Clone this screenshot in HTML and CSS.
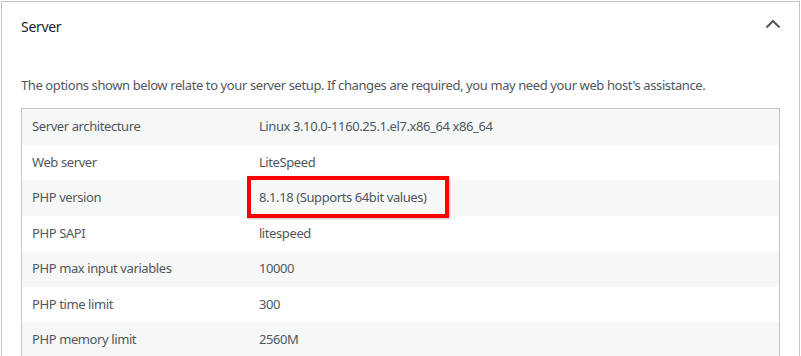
FILE: index.html
```html
<!DOCTYPE html>
<html>
<head>
<meta charset="utf-8">
<link rel="stylesheet" href="styles.css">
</head>
<body>
<section class="panel">
  <header class="panel-head">
    <h3 class="panel-title">Server</h3>
    <svg class="chevron" width="16" height="10" viewBox="0 0 16 10"><path d="M1.5 8.5 L8 2 L14.5 8.5" fill="none" stroke="#50575e" stroke-width="2"/></svg>
  </header>
  <div class="panel-body">
    <p class="desc">The options shown below relate to your server setup. If changes are required, you may need your web host's assistance.</p>
    <table class="info">
      <tbody>
        <tr><td class="label">Server architecture</td><td>Linux 3.10.0-1160.25.1.el7.x86_64 x86_64</td></tr>
        <tr><td class="label">Web server</td><td>LiteSpeed</td></tr>
        <tr><td class="label">PHP version</td><td class="marked">8.1.18 (Supports 64bit values)<span class="highlight"></span></td></tr>
        <tr><td class="label">PHP SAPI</td><td>litespeed</td></tr>
        <tr><td class="label">PHP max input variables</td><td>10000</td></tr>
        <tr><td class="label">PHP time limit</td><td>300</td></tr>
        <tr><td class="label">PHP memory limit</td><td>2560M</td></tr>
      </tbody>
    </table>
  </div>
</section>
</body>
</html>
```
FILE: styles.css
```css
html, body { margin: 0; padding: 0; background: #fff; }
body {
  padding: 1px 1px 0 1px;
  font-family: "Noto Sans", "Open Sans", sans-serif;
  font-size: 13px;
  letter-spacing: -0.4px;
  color: #50575e;
  overflow: hidden;
}
.panel {
  border: 1px solid #c3c4c7;
  border-bottom: none;
  background: #fff;
}
.panel-head {
  display: flex;
  align-items: center;
  justify-content: space-between;
  height: 48px;
  padding: 0 18px 0 19px;
}
.panel-title {
  margin: 0;
  font-size: 14px;
  font-weight: 400;
  letter-spacing: -0.3px;
  color: #1d2327;
}
.chevron { display: block; margin-top: -5px; }
.panel-body { padding: 0 19px 0 19px; }
.desc {
  margin: 25px 0 13px 0;
  line-height: 20px;
}
.info {
  width: 100%;
  border: 1px solid #c3c4c7;
  border-collapse: collapse;
  table-layout: fixed;
}
.info td {
  padding: 8px 10px;
  line-height: 19.5px;
  vertical-align: middle;
}
.info td.label { width: 30%; box-sizing: border-box; }
.info tr:nth-child(odd) { background: #f6f7f7; }
.marked { position: relative; }
.highlight {
  position: absolute;
  left: -2px;
  top: -4px;
  width: 194px;
  height: 34px;
  border: 4px solid #f00;
  box-shadow: 1px 1px 2px rgba(0,0,0,0.25);
}
```
